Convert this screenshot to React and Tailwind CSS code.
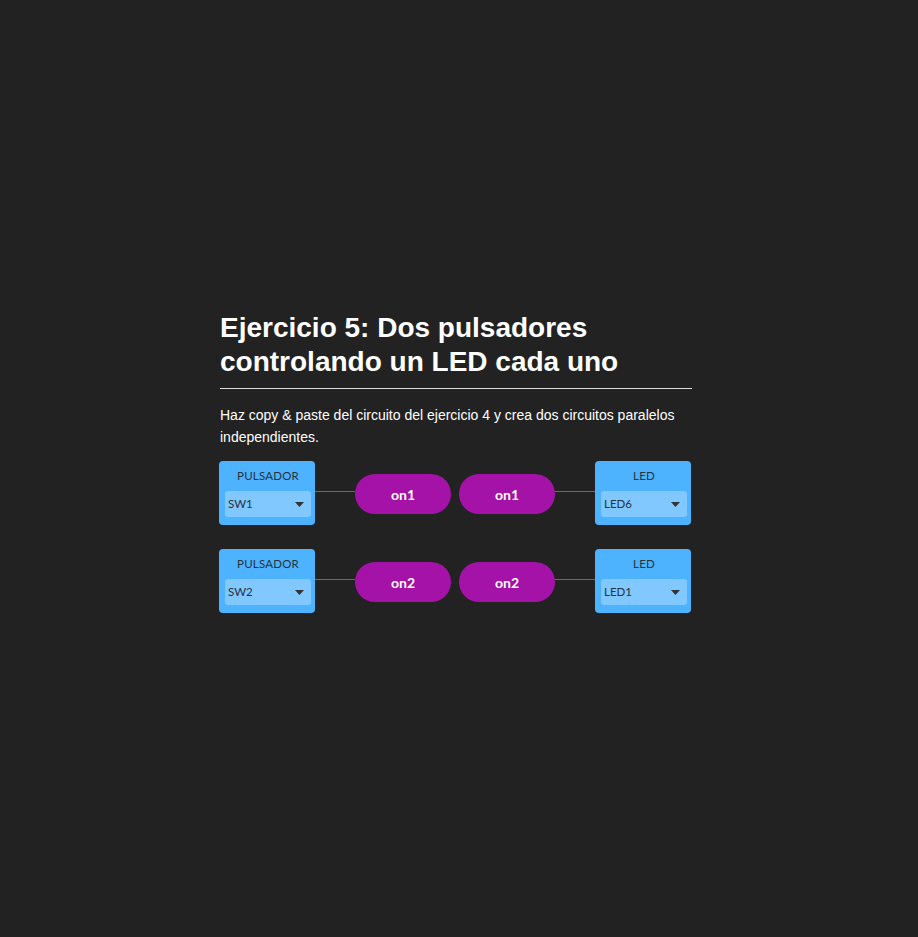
import React from 'react';

const Caret = () => (
  <svg width="9" height="5" viewBox="0 0 9 5" className="shrink-0">
    <path d="M0 0h9L4.5 5z" fill="#333" />
  </svg>
);

const Block = ({ label, value }) => (
  <div className="w-[96px] h-[64px] rounded-[4px] bg-[#4db3ff] flex flex-col items-center pt-[8px] pl-[6px] pr-[4px]">
    <span className="text-[11.5px] leading-[14px] text-[#26323e] tracking-[0.2px]">{label}</span>
    <div className="mt-[8px] w-full h-[26px] rounded-[3px] bg-[#80c8ff] flex items-center justify-between pl-[3px] pr-[7px]">
      <span className="text-[11.5px] text-[#26323e]">{value}</span>
      <Caret />
    </div>
  </div>
);

const Pill = ({ text }) => (
  <div className="w-[96px] h-[40px] rounded-full bg-[#a412a8] flex items-center justify-center text-white font-bold text-[14px]">
    {text}
  </div>
);

const Wire = () => <div className="w-[40px] h-px bg-[#6b6b6b] -mt-[1px]" />;

const Row = ({ sw, on, led }) => (
  <div className="flex items-start ml-[-1px]">
    <Block label="PULSADOR" value={sw} />
    <div className="flex items-center h-[64px] pb-[1px]">
      <div className="flex items-center self-start mt-[31px]"><Wire /></div>
      <div className="self-start mt-[13px] flex gap-[8px]">
        <Pill text={on} />
        <Pill text={on} />
      </div>
      <div className="flex items-center self-start mt-[31px]"><Wire /></div>
    </div>
    <Block label="LED" value={led} />
  </div>
);

export default function App() {
  return (
    <div className="min-h-screen bg-[#222222] pl-[220px]" style={{ fontFamily: 'Lato, "Liberation Sans", sans-serif' }}>
      <div className="w-[472px] pt-[311px]">
        <h1 className="text-[28px] leading-[34px] font-bold text-white" style={{ fontFamily: '"Liberation Sans", Arial, sans-serif' }}>
          Ejercicio 5: Dos pulsadores controlando un LED cada uno
        </h1>
        <div className="mt-[9px] h-px bg-[#dddddd]" />
        <p className="mt-[15px] text-[14px] leading-[22px] text-white" style={{ fontFamily: '"Liberation Sans", Arial, sans-serif' }}>
          Haz copy &amp; paste del circuito del ejercicio 4 y crea dos circuitos paralelos independientes.
        </p>
        <div className="mt-[13px] flex flex-col gap-[24px]">
          <Row sw="SW1" on="on1" led="LED6" />
          <Row sw="SW2" on="on2" led="LED1" />
        </div>
      </div>
    </div>
  );
}
